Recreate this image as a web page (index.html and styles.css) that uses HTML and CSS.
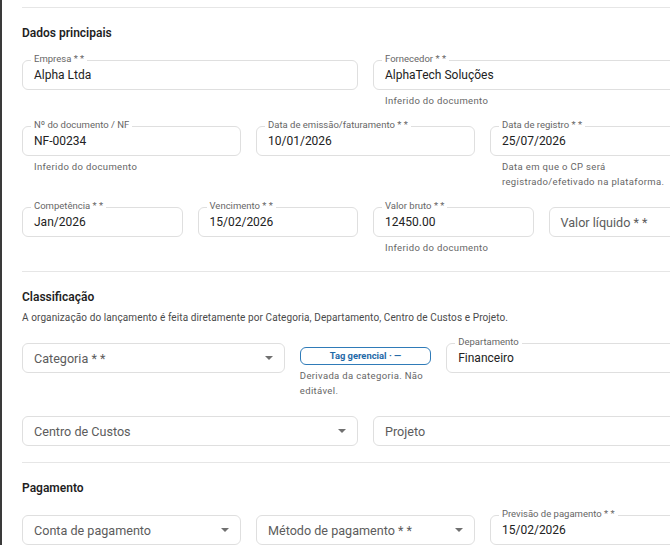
FILE: index.html
```html
<!DOCTYPE html>
<html lang="pt">
<head>
<meta charset="UTF-8">
<meta name="viewport" content="width=device-width, initial-scale=1">
<title>Novo lançamento - Contas a pagar</title>
<link rel="stylesheet" href="styles.css">
</head>
<body>

<main class="form-lancamento">

    <!-- Dados principais -->
    <section class="form-section">
        <div class="section-head">
            <h3>Dados principais</h3>
        </div>

        <div class="grid grid-2">
            <div class="campo">
                <div class="field"><span class="field-label">Empresa * *</span><span class="field-value">Alpha Ltda</span></div>
            </div>
            <div class="campo">
                <div class="field"><span class="field-label">Fornecedor * *</span><span class="field-value">AlphaTech Soluções</span></div>
                <p class="helper">Inferido do documento</p>
            </div>
        </div>

        <div class="grid grid-3">
            <div class="campo">
                <div class="field"><span class="field-label">Nº do documento / NF</span><span class="field-value">NF-00234</span></div>
                <p class="helper">Inferido do documento</p>
            </div>
            <div class="campo">
                <div class="field"><span class="field-label">Data de emissão/faturamento * *</span><span class="field-value">10/01/2026</span></div>
            </div>
            <div class="campo">
                <div class="field"><span class="field-label">Data de registro * *</span><span class="field-value">25/07/2026</span></div>
                <p class="helper">Data em que o CP será<br>registrado/efetivado na plataforma.</p>
            </div>
        </div>

        <div class="grid grid-4">
            <div class="campo">
                <div class="field"><span class="field-label">Competência * *</span><span class="field-value">Jan/2026</span></div>
            </div>
            <div class="campo">
                <div class="field"><span class="field-label">Vencimento * *</span><span class="field-value">15/02/2026</span></div>
            </div>
            <div class="campo">
                <div class="field"><span class="field-label">Valor bruto * *</span><span class="field-value">12450.00</span></div>
                <p class="helper">Inferido do documento</p>
            </div>
            <div class="campo">
                <div class="field"><span class="placeholder">Valor líquido * *</span></div>
            </div>
        </div>
    </section>

    <!-- Classificação -->
    <section class="form-section">
        <div class="section-head">
            <h3>Classificação</h3>
            <p class="section-desc">A organização do lançamento é feita diretamente por Categoria, Departamento, Centro de Custos e Projeto.</p>
        </div>

        <div class="grid grid-class">
            <div class="campo">
                <div class="field select"><span class="placeholder">Categoria * *</span><svg class="arrow" viewBox="0 0 10 5"><path d="M0 0l5 5 5-5z"/></svg></div>
            </div>
            <div class="campo tag-campo">
                <div class="tag">Tag gerencial · —</div>
                <p class="helper">Derivada da categoria. Não<br>editável.</p>
            </div>
            <div class="campo">
                <div class="field"><span class="field-label">Departamento</span><span class="field-value">Financeiro</span></div>
            </div>
        </div>

        <div class="grid grid-2">
            <div class="campo">
                <div class="field select"><span class="placeholder">Centro de Custos</span><svg class="arrow" viewBox="0 0 10 5"><path d="M0 0l5 5 5-5z"/></svg></div>
            </div>
            <div class="campo">
                <div class="field"><span class="placeholder">Projeto</span></div>
            </div>
        </div>
    </section>

    <!-- Pagamento -->
    <section class="form-section">
        <div class="section-head">
            <h3>Pagamento</h3>
        </div>

        <div class="grid grid-3">
            <div class="campo">
                <div class="field select"><span class="placeholder">Conta de pagamento</span><svg class="arrow" viewBox="0 0 10 5"><path d="M0 0l5 5 5-5z"/></svg></div>
            </div>
            <div class="campo">
                <div class="field select"><span class="placeholder">Método de pagamento * *</span><svg class="arrow" viewBox="0 0 10 5"><path d="M0 0l5 5 5-5z"/></svg></div>
            </div>
            <div class="campo">
                <div class="field"><span class="field-label">Previsão de pagamento * *</span><span class="field-value">15/02/2026</span></div>
            </div>
        </div>
    </section>

</main>

</body>
</html>
```

FILE: styles.css
```css
html, body {
    overflow: hidden;
}
body {
    margin: 0;
    background-color: #fff;
    border-left: 2px solid #3a3a3a; /* borda do painel lateral */
    font-family: Roboto, "Noto Sans", sans-serif;
    color: #1f1f1f;
    min-height: 100vh;
}
.form-lancamento {
    width: 687px;
    padding: 7px 0 0 20px;
}
.form-section {
    border-top: 1px solid #e6e6e6;
    padding-bottom: 16px;
}
.section-head {
    margin: 17px 0 19px;
}
.section-head h3 {
    margin: 0;
    font-size: 12px;
    line-height: 16px;
    font-weight: 600;
}
.section-desc {
    margin: 6px 0 0;
    font-size: 10px;
    line-height: 13px;
    color: #4a4a4a;
    letter-spacing: 0.1px;
}
.grid {
    display: grid;
    column-gap: 15px;
    margin-bottom: 18px;
}
.grid:last-child {
    margin-bottom: 0;
}
.grid-2 { grid-template-columns: 1fr 1fr; }
.grid-3 { grid-template-columns: 1fr 1fr 1fr; }
.grid-4 { grid-template-columns: 1fr 1fr 1fr 1fr; }
.grid-class { grid-template-columns: 2fr 1fr 2fr; }

/* campo com contorno (estilo outlined) */
.field {
    position: relative;
    box-sizing: border-box;
    height: 30px;
    border: 1px solid #dfdfdf;
    border-radius: 6px;
    padding: 0 11px;
    display: flex;
    align-items: center;
    justify-content: space-between;
}
.field-label {
    position: absolute;
    top: -8px;
    left: 8px;
    padding: 0 3px;
    background-color: #fff;
    font-size: 9.5px;
    line-height: 11px;
    color: #666;
}
.field-value {
    font-size: 12px;
    color: #222;
    margin-top: -1px;
}
.placeholder {
    font-size: 12.6px;
    color: #5c5c5c;
}
.arrow {
    width: 8px;
    height: 4px;
    fill: #707070;
}
.helper {
    margin: 3px 0 0 12px;
    font-size: 9.5px;
    line-height: 15px;
    letter-spacing: 0.35px;
    color: #666;
}
.tag-campo {
    padding-top: 4px;
}
.tag-campo .helper {
    margin-left: 0;
}
.tag {
    box-sizing: border-box;
    height: 18px;
    border: 1px solid #2f7bb8;
    border-radius: 6px;
    text-align: center;
    font-size: 9.4px;
    line-height: 16px;
    font-weight: 700;
    color: #1f6aa8;
}
```
